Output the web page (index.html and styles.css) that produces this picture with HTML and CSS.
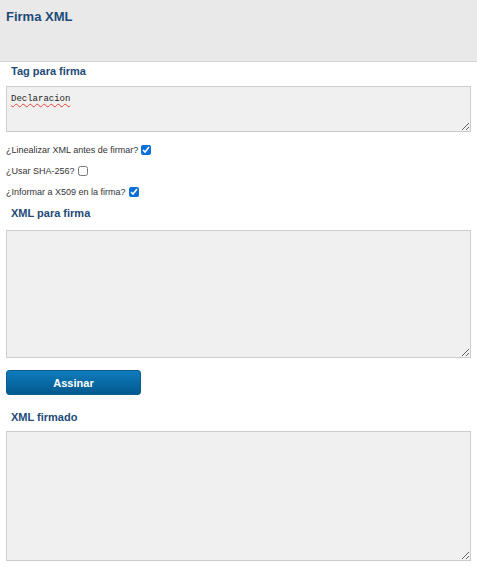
FILE: index.html
```html
<!DOCTYPE html>
<html lang="es">
<head>
<meta charset="utf-8">
<title>Firma XML</title>
<link rel="stylesheet" href="styles.css">
</head>
<body>
<header class="top">
  <h1 class="title">Firma XML</h1>
</header>
<main class="content">
  <h2 class="label first">Tag para firma</h2>
  <textarea class="field small" spellcheck="false">Declaracion</textarea>
  <div class="options">
    <label class="opt">¿Linealizar XML antes de firmar? <input type="checkbox" class="chk" checked></label>
    <label class="opt">¿Usar SHA-256? <input type="checkbox" class="chk"></label>
    <label class="opt">¿Informar a X509 en la firma? <input type="checkbox" class="chk" checked></label>
  </div>
  <h2 class="label second">XML para firma</h2>
  <textarea class="field big"></textarea>
  <button class="btn" type="button">Assinar</button>
  <h2 class="label third">XML firmado</h2>
  <textarea class="field big last"></textarea>
</main>
</body>
</html>
```
FILE: styles.css
```css
* { box-sizing: border-box; }
html, body { margin: 0; padding: 0; background: #ffffff; }
body { font-family: "Liberation Sans", Arial, sans-serif; color: #333; }

.top {
  height: 62px;
  background: #e9e9e9;
  border-bottom: 1px solid #d4d4d4;
  padding: 9px 6px 0;
}
.title {
  margin: 0;
  font-size: 13px;
  line-height: 16px;
  font-weight: bold;
  color: #1d4b78;
}

.content { padding: 0 6px; display: flex; flex-direction: column; align-items: flex-start; }

.label {
  margin: 0;
  padding-left: 5px;
  font-size: 11px;
  line-height: 16px;
  font-weight: bold;
  color: #1d4b78;
}
.label.first { margin-top: 1px; margin-bottom: 7px; }
.label.second { margin-top: 3px; margin-bottom: 9px; }
.label.third { margin-top: 14px; margin-bottom: 6px; }

.field {
  display: block;
  width: 100%;
  margin: 0;
  background: #f0f0f0;
  border: 1px solid #cccccc;
  border-radius: 0;
  padding: 6px 4px;
  font-family: "Liberation Mono", "Courier New", monospace;
  font-size: 9px;
  line-height: 12px;
  color: #222;
  resize: both;
}
.field.small {
  height: 46px;
  text-decoration: underline wavy #e0453a;
  text-decoration-thickness: 1px;
  text-underline-offset: 2px;
}
.field.big { height: 128px; }
.field.last { height: 130px; }

.options { margin-top: 7px; display: flex; flex-direction: column; }
.opt {
  display: flex;
  align-items: center;
  gap: 2px;
  height: 21px;
  font-size: 9px;
  color: #333;
}
.chk {
  width: 10px;
  height: 10px;
  margin: 0 0 0 1px;
  accent-color: #0a6fd8;
}

.btn {
  margin-top: 12px;
  width: 135px;
  height: 25px;
  border: 1px solid #0b5c8f;
  border-radius: 3px;
  background: linear-gradient(#0f7cbc, #02598f);
  color: #ffffff;
  font-family: "Liberation Sans", Arial, sans-serif;
  font-size: 11px;
  font-weight: bold;
  padding: 0;
}
```
